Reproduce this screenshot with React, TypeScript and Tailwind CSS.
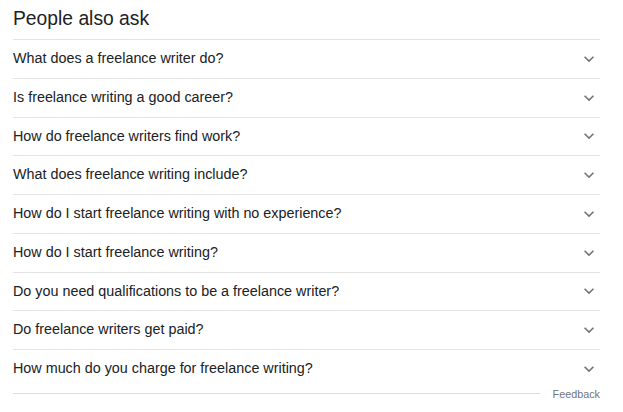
const questions = [
  'What does a freelance writer do?',
  'Is freelance writing a good career?',
  'How do freelance writers find work?',
  'What does freelance writing include?',
  'How do I start freelance writing with no experience?',
  'How do I start freelance writing?',
  'Do you need qualifications to be a freelance writer?',
  'Do freelance writers get paid?',
  'How much do you charge for freelance writing?',
]

function Chevron() {
  return (
    <svg width="20" height="20" viewBox="0 0 24 24" className="fill-[#70757a]">
      <path d="M16.59 8.59L12 13.17 7.41 8.59 6 10l6 6 6-6z" />
    </svg>
  )
}

export default function App() {
  return (
    <div className="w-[623px] h-[412px] bg-white pl-[13px] font-['Liberation_Sans',Arial,sans-serif] text-[#202124]">
      <div className="w-[587px]">
        <div className="h-[39px] pt-[6px] text-[19.3px] leading-[26px]">People also ask</div>
        <div>
          {questions.map((q) => (
            <div
              key={q}
              className="h-[38.75px] border-t border-[#e3e3e3] flex items-center justify-between text-[14.35px]"
            >
              <span>{q}</span>
              <span className="mr-[1px] flex items-center">
                <Chevron />
              </span>
            </div>
          ))}
        </div>
        <div className="flex items-center h-[12px]">
          <div className="flex-1 border-t border-[#dadce0]" />
          <span className="ml-[13px] text-[10.8px] text-[#70757a] leading-[12px]">Feedback</span>
        </div>
      </div>
    </div>
  )
}
